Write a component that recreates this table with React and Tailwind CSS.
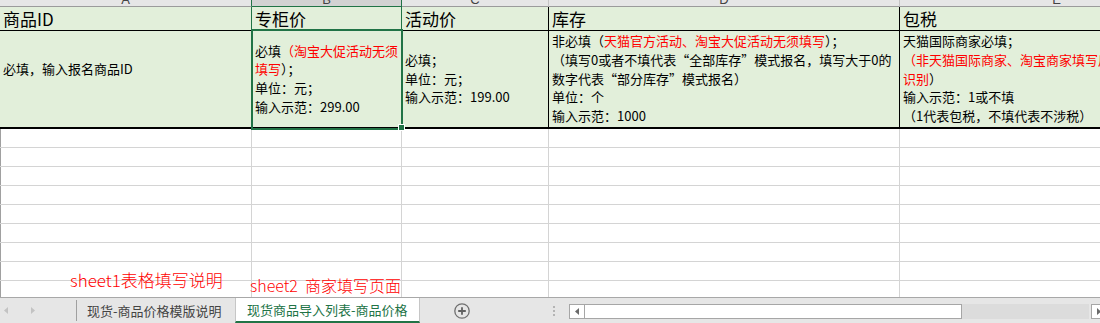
import React from 'react';

const GRID = 'grid grid-cols-[252px_150px_147px_351px_314px]';

function Red({ children }) {
  return <span className="text-[#ff0000]">{children}</span>;
}

function TriLeft({ className }) {
  return (
    <svg className={className} width="4" height="7" viewBox="0 0 4 7">
      <path d="M4 0 L0 3.5 L4 7 Z" fill="currentColor" />
    </svg>
  );
}

function TriRight({ className }) {
  return (
    <svg className={className} width="4" height="7" viewBox="0 0 4 7">
      <path d="M0 0 L4 3.5 L0 7 Z" fill="currentColor" />
    </svg>
  );
}

export default function App() {
  const letters = ['A', 'B', 'C', 'D', 'E'];
  const emptyRows = Array.from({ length: 9 });

  return (
    <div className="w-[1100px] h-[323px] overflow-hidden bg-white flex flex-col font-['Noto_Sans_CJK_SC',sans-serif] text-black">
      {/* sheet area */}
      <div className="relative flex-1 overflow-hidden">
        <div className="w-[1214px]">
          {/* column letters, mostly scrolled out of view */}
          <div className={`${GRID} -mt-[13px] h-[20px] bg-[#e6e6e6] font-['Liberation_Sans',sans-serif] text-[13px] leading-none text-[#444]`}>
            {letters.map((l) => (
              <div
                key={l}
                className={
                  l === 'B'
                    ? 'flex items-end justify-center bg-[#d2d2d2] border-b border-r border-b-[#217346] border-r-[#217346]'
                    : l === 'A'
                    ? 'flex items-end justify-center border-b border-r border-b-[#9b9b9b] border-r-[#217346]'
                    : 'flex items-end justify-center border-b border-r border-b-[#9b9b9b] border-r-[#c4c4c4]'
                }
              >
                {l}
              </div>
            ))}
          </div>

          {/* row 1: headings */}
          <div className={`${GRID} h-[24px] border-b border-black bg-[#e2efda] text-[17px] leading-[23px]`}>
            <div className="flex items-center pl-[3px] border-r border-[#217346]">商品ID</div>
            <div className="flex items-center pl-[3px] border-r border-[#217346]">专柜价</div>
            <div className="flex items-center pl-[3px] border-r border-black">活动价</div>
            <div className="flex items-center pl-[3px] border-r border-black">库存</div>
            <div className="flex items-center pl-[3px]">包税</div>
          </div>

          {/* row 2: notes */}
          <div className={`${GRID} h-[98px] border-b-2 border-black bg-[#e2efda] text-[13px] leading-[18.75px]`}>
            <div className="flex flex-col justify-center pl-[3px] border-r border-[#217346]">
              <div>必填，输入报名商品ID</div>
              <div>&nbsp;</div>
            </div>
            <div className="relative flex flex-col justify-center pl-[3px] border-r border-[#217346] whitespace-nowrap">
              <div>必填<Red>（淘宝大促活动无须</Red></div>
              <div><Red>填写</Red>）；</div>
              <div>单位：元；</div>
              <div>输入示范：299.00</div>
              <div className="absolute z-10 -left-[1px] -top-[2px] -right-[2px] -bottom-[3px] border-2 border-[#217346]" />
              <div className="absolute z-20 -right-[4px] -bottom-[4px] w-[7px] h-[7px] bg-[#217346] border border-white" />
            </div>
            <div className="flex flex-col justify-center pl-[3px] border-r border-black whitespace-nowrap">
              <div>必填；</div>
              <div>单位：元；</div>
              <div>输入示范：199.00</div>
            </div>
            <div className="flex flex-col justify-center pl-[3px] border-r border-black whitespace-nowrap overflow-hidden">
              <div>非必填（<Red>天猫官方活动、淘宝大促活动无须填写</Red>）；</div>
              <div>（填写0或者不填代表“全部库存”模式报名，填写大于0的</div>
              <div>数字代表“部分库存”模式报名）</div>
              <div>单位：个</div>
              <div>输入示范：1000</div>
            </div>
            <div className="flex flex-col justify-center pl-[3px] whitespace-nowrap overflow-hidden">
              <div>天猫国际商家必填；</div>
              <div><Red>（非天猫国际商家、淘宝商家填写后无法</Red></div>
              <div><Red>识别</Red>）</div>
              <div>输入示范：1或不填</div>
              <div>（1代表包税，不填代表不涉税）</div>
            </div>
          </div>

          {/* empty rows */}
          <div className="shadow-[inset_1px_0_0_#a0a0a0]">
            {emptyRows.map((_, i) => (
              <div key={i} className={`${GRID} h-[19px] border-b border-[#d4d4d4]`}>
                <div className="border-r border-[#d4d4d4]" />
                <div className="border-r border-[#d4d4d4]" />
                <div className="border-r border-[#d4d4d4]" />
                <div className="border-r border-[#d4d4d4]" />
                <div />
              </div>
            ))}
          </div>
        </div>

        {/* handwritten-style notes laid over the grid */}
        <div className="absolute left-[70px] top-[271px] text-[17px] leading-[17px] font-light text-[#ff0000] whitespace-nowrap">
          sheet1表格填写说明
        </div>
        <div className="absolute left-[250px] top-[277px] text-[16px] leading-[16px] font-light text-[#ff0000] whitespace-nowrap">
          sheet2&nbsp; 商家填写页面
        </div>
      </div>

      {/* sheet tabs + scrollbar */}
      <div className="h-[26px] shrink-0 flex items-stretch bg-[#e6e6e6] border-t border-[#a8a8a8] text-[13px] leading-none">
        <div className="w-[76px] shrink-0 flex items-center text-[#c3c3c3]">
          <TriLeft className="ml-[4px]" />
          <TriRight className="ml-[23px]" />
        </div>
        <div className="w-[159px] shrink-0 my-[2px] flex items-center pl-[10px] border-l border-[#a0a0a0] text-[#444] whitespace-nowrap">
          现货-商品价格模版说明
        </div>
        <div className="w-[185px] shrink-0 flex items-center pl-[11px] bg-white border-x border-[#c6c6c6] border-b-2 border-b-[#217346] text-[#217346] whitespace-nowrap">
          现货商品导入列表-商品价格
        </div>
        <div className="ml-[34px] shrink-0 flex items-center">
          <svg width="16" height="16" viewBox="0 0 16 16">
            <circle cx="8" cy="8" r="7.2" fill="none" stroke="#707070" strokeWidth="1.3" />
            <path d="M8 4.2 V11.8 M4.2 8 H11.8" stroke="#606060" strokeWidth="1.8" />
          </svg>
        </div>
        <div className="ml-[83px] shrink-0 flex flex-col justify-center gap-[2px]">
          <div className="w-[2px] h-[2px] bg-[#b4b4b4]" />
          <div className="w-[2px] h-[2px] bg-[#b4b4b4]" />
          <div className="w-[2px] h-[2px] bg-[#b4b4b4]" />
        </div>
        <div className="ml-[14px] shrink-0 self-start mt-[6px] flex h-[15px]">
          <div className="w-[16px] shrink-0 flex items-center justify-center bg-white border border-[#a6a6a6] text-[#6a6a6a]">
            <TriLeft />
          </div>
          <div className="w-[377px] shrink-0 bg-white border-y border-r border-[#a6a6a6]" />
          <div className="w-[127px] shrink-0 bg-[#dcdcdc]" />
          <div className="ml-[2px] w-[16px] shrink-0 flex items-center justify-center bg-white border border-[#a6a6a6] text-[#6a6a6a]">
            <TriRight />
          </div>
        </div>
      </div>
    </div>
  );
}
